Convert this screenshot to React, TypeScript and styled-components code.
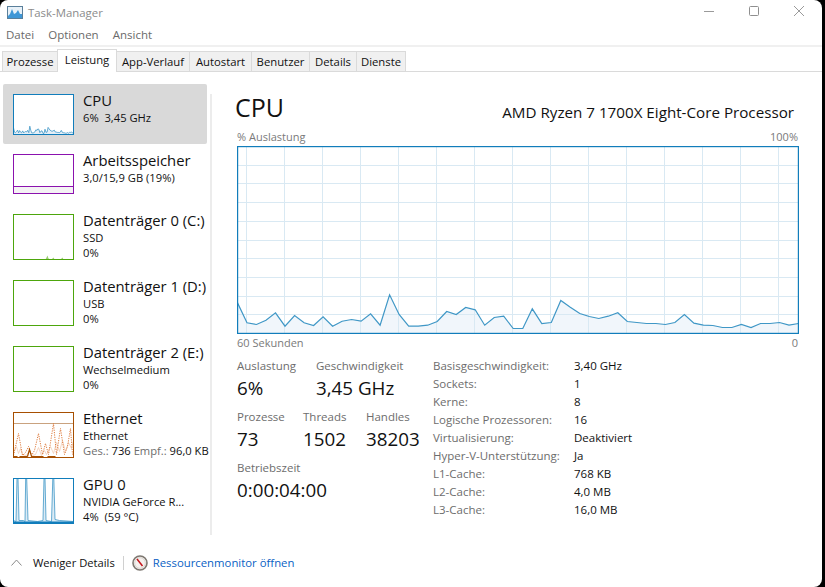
import React from "react"
import styled, { createGlobalStyle } from "styled-components"

const FONT = `"Open Sans", "Noto Sans", sans-serif`

const GlobalStyle = createGlobalStyle`
  html, body {
    margin: 0;
    padding: 0;
    background: #000;
    overflow: hidden;
  }
  body {
    font-family: ${FONT};
    font-size: 12px;
    color: #1a1a1a;
  }
`

const Window = styled.div`
  width: 822px;
  height: 587px;
  background: #fff;
  border-radius: 8px;
  display: flex;
  flex-direction: column;
  overflow: hidden;
`
const TitleBar = styled.div`
  height: 24px;
  display: flex;
  align-items: center;
  padding-left: 7px;
  color: #8b8b8b;
  font-size: 11.4px;
  gap: 5px;
`
const WindowButtons = styled.div`
  margin-left: auto;
  display: flex;
  align-items: center;
  gap: 35px;
  padding-right: 18px;
  padding-bottom: 3px;
`
const MenuBar = styled.div`
  height: 21px;
  display: flex;
  align-items: center;
  gap: 14px;
  padding-left: 6px;
  color: #6a6a6a;
  border-bottom: 2px solid #f0f0f0;
  font-size: 11.5px;
`
const TabStrip = styled.div`
  height: 24px;
  display: flex;
  align-items: flex-end;
  padding-left: 3px;
  border-bottom: 1px solid #dadada;
`
const Tab = styled.div<{ $active?: boolean; $w: number }>`
  width: ${p => p.$w}px;
  height: ${p => (p.$active ? 23 : 20)}px;
  box-sizing: border-box;
  display: flex;
  align-items: center;
  justify-content: center;
  font-size: 11.3px;
  color: #111;
  background: ${p => (p.$active ? "#fff" : "#f0f0f0")};
  border: 1px solid #dadada;
  border-bottom: none;
  margin-bottom: ${p => (p.$active ? -1 : 0)}px;
  padding-bottom: ${p => (p.$active ? 3 : 0)}px;
  margin-left: -1px;
  position: relative;
`
const Body = styled.div`
  flex: 1;
  display: flex;
  min-height: 0;
`
const Sidebar = styled.div`
  width: 207px;
  padding: 12px 0 0 3px;
  flex-shrink: 0;
`
const NavItem = styled.div<{ $selected?: boolean; $h: number }>`
  height: ${p => p.$h}px;
  width: ${p => (p.$selected ? 204 : 207)}px;
  box-sizing: border-box;
  padding: 10px 0 0 10px;
  display: flex;
  gap: 9px;
  overflow: hidden;
  white-space: nowrap;
  border-radius: 2px;
  background: ${p => (p.$selected ? "#d9d9d9" : "transparent")};
`
const NavText = styled.div`
  margin-top: -3px;
`
const NavName = styled.div`
  font-size: 14.8px;
  line-height: 19px;
  color: #111;
`
const NavLine = styled.div`
  font-size: 11.2px;
  line-height: 15px;
  color: #111;
`
const Muted = styled.span`
  color: #6d6d6d;
`
const Divider = styled.div`
  width: 2px;
  height: 441px;
  margin: 22px 25px 0 0;
  background: #ececec;
  flex-shrink: 0;
`
const Main = styled.div`
  width: 561px;
  padding-top: 20px;
`
const Header = styled.div`
  height: 36px;
  display: flex;
  align-items: center;
  justify-content: space-between;
`
const Title = styled.div`
  font-size: 25px;
  line-height: 30px;
  margin-left: -2px;
  padding-bottom: 6px;
  color: #111;
`
const Processor = styled.div`
  font-size: 15.2px;
  padding-right: 4px;
  padding-top: 4px;
  color: #111;
`
const CaptionRow = styled.div`
  height: 16px;
  padding-bottom: 2px;
  display: flex;
  justify-content: space-between;
  align-items: center;
  font-size: 11px;
  color: #7a7a7a;
`
const StatsArea = styled.div`
  display: flex;
  margin-top: 5px;
`
const StatsLeft = styled.div`
  width: 196px;
`
const StatRow = styled.div`
  display: flex;
  margin-bottom: 7px;
`
const Stat = styled.div<{ $w?: number }>`
  width: ${p => (p.$w ? `${p.$w}px` : "auto")};
`
const StatLabel = styled.div`
  font-size: 11.5px;
  line-height: 18px;
  color: #6d6d6d;
`
const StatValue = styled.div`
  font-size: 18.8px;
  line-height: 26px;
  color: #111;
`
const SpecGrid = styled.div`
  display: grid;
  grid-template-columns: 141px auto;
  grid-auto-rows: 18px;
  align-items: center;
  font-size: 11.5px;
  margin-top: -1px;
  align-self: flex-start;
`
const SpecLabel = styled.div`
  color: #6d6d6d;
`
const SpecValue = styled.div`
  color: #111;
`
const Footer = styled.div`
  height: 43px;
  padding-bottom: 3px;
  flex-shrink: 0;
  display: flex;
  align-items: center;
  padding-left: 11px;
  font-size: 11.2px;
`
const LessDetails = styled.div`
  margin-left: 11px;
  color: #111;
`
const FooterRule = styled.div`
  width: 1px;
  height: 14px;
  background: #d0d0d0;
  margin: 0 8px;
`
const MonitorLink = styled.div`
  margin-left: 5px;
  font-size: 11.35px;
  color: #0a5fc4;
`
const ChartSvg = styled.svg`
  display: block;
  flex-shrink: 0;
`

// y values read off the reference, 3x crop pixels (baseline 157)
const cpuData = [
  65, 125, 130, 117, 95, 135, 103, 125, 133, 107, 135, 120, 115, 120, 98, 132, 41, 100, 135, 135,
  132, 121, 91, 100, 79, 86, 132, 109, 105, 142, 142, 83, 127, 124, 58, 78, 97, 106, 112, 105,
  95, 121, 124, 127, 127, 130, 124, 100, 126, 132, 133, 139, 139, 130, 139, 127, 127, 124, 132, 127,
]

const linePoints = (w: number, h: number, scale: number) =>
  cpuData.map((v, i) => `${((i * w) / 59).toFixed(1)},${(h - ((157 - v) / 3) * scale).toFixed(1)}`).join(" ")

const CpuChart = () => {
  const w = 561
  const h = 187
  const pts = linePoints(w, h, 1)
  const vs = Array.from({ length: 15 }, (_, i) => 9 + i * 38)
  const hs = Array.from({ length: 9 }, (_, i) => Math.round((i + 1) * 18.7))
  return (
    <ChartSvg width={w + 1} height={h + 1} viewBox={`-0.5 -0.5 ${w + 1} ${h + 1}`}>
      <polygon points={`0,${h} ${pts} ${w},${h}`} fill="#f1f6fb" />
      {vs.map(x => <line key={x} x1={x} x2={x} y1={0} y2={h} stroke="#d9e9f3" strokeWidth="1" />)}
      {hs.map(y => <line key={y} x1={0} x2={w} y1={y} y2={y} stroke="#d9e9f3" strokeWidth="1" />)}
      <polyline points={pts} fill="none" stroke="#3f97c6" strokeWidth="1.2" />
      <rect x="0" y="0" width={w} height={h} fill="none" stroke="#117dbb" strokeWidth="1.4" />
    </ChartSvg>
  )
}

const Mini = ({ color, h = 45, children }: { color: string; h?: number; children?: React.ReactNode }) => (
  <ChartSvg width={61} height={h + 1} viewBox={`-0.5 -0.5 61 ${h + 1}`}>
    {children}
    <rect x="0" y="0" width="60" height={h} fill="none" stroke={color} strokeWidth="1" />
  </ChartSvg>
)

const nets = "0,40 3,34 5,41 7,36 9,42 13,43 16,38 19,43 22,42 25,35 28,43 31,38 33,42 37,34 40,41 43,30 46,39 49,28 52,39 55,30 58,36 60,28"
const netsPeak = "0,43 5,21 9,43 12,40 15,34 18,43 21,38 25,21 29,42 32,31 35,42 37,30 40,11 43,42 47,16 51,42 54,34 57,16 59,42"

const specs: [string, string][] = [
  ["Basisgeschwindigkeit:", "3,40 GHz"],
  ["Sockets:", "1"],
  ["Kerne:", "8"],
  ["Logische Prozessoren:", "16"],
  ["Virtualisierung:", "Deaktiviert"],
  ["Hyper-V-Unterstützung:", "Ja"],
  ["L1-Cache:", "768 KB"],
  ["L2-Cache:", "4,0 MB"],
  ["L3-Cache:", "16,0 MB"],
]

const tabs: [string, number][] = [
  ["Prozesse", 56], ["Leistung", 60], ["App-Verlauf", 74], ["Autostart", 63],
  ["Benutzer", 59], ["Details", 48], ["Dienste", 50],
]

const GREEN = "#4da60c"

const App = () => {
  const cpuMini = linePoints(60, 40, 40 / 187)
  return (
    <Window>
      <GlobalStyle />
      <TitleBar>
        <svg width="16" height="13" viewBox="0 0 16 13">
          <rect x="0.5" y="0.5" width="15" height="12" fill="#e8f1f8" stroke="#5a7f9a" />
          <path d="M1 10 L3 8 L5 3 L7 8 L9 7 L11 4 L13 8 L15 8 L15 12 L1 12 Z" fill="#3f97d6" />
        </svg>
        Task-Manager
        <WindowButtons>
          <svg width="10" height="10" viewBox="0 0 10 10"><path d="M0 5.5H10" stroke="#9a9a9a" /></svg>
          <svg width="10" height="10" viewBox="0 0 10 10"><rect x="0.5" y="0.5" width="9" height="9" rx="1" fill="none" stroke="#8f8f8f" /></svg>
          <svg width="10" height="10" viewBox="0 0 10 10"><path d="M0 0L10 10M10 0L0 10" stroke="#9a9a9a" /></svg>
        </WindowButtons>
      </TitleBar>
      <MenuBar>
        <span>Datei</span>
        <span>Optionen</span>
        <span>Ansicht</span>
      </MenuBar>
      <TabStrip>
        {tabs.map(([label, w]) => (
          <Tab key={label} $w={w} $active={label === "Leistung"}>{label}</Tab>
        ))}
      </TabStrip>
      <Body>
        <Sidebar>
          <NavItem $selected $h={60}>
            <Mini color="#117dbb" h={40}>
              <rect x="0" y="0" width="60" height="40" fill="#fff" />
              <polygon points={`0,40 ${cpuMini} 60,40`} fill="#e4eff7" />
              <polyline points={cpuMini} fill="none" stroke="#3f97c6" strokeWidth="0.8" />
            </Mini>
            <NavText>
              <NavName>CPU</NavName>
              <NavLine>6%&nbsp; 3,45 GHz</NavLine>
            </NavText>
          </NavItem>
          <NavItem $h={60}>
            <Mini color="#8b12ae" h={39}>
              <rect x="0" y="32" width="60" height="7" fill="#f4f2f4" />
              <line x1="0" x2="60" y1="32" y2="32" stroke="#8b12ae" />
            </Mini>
            <NavText>
              <NavName>Arbeitsspeicher</NavName>
              <NavLine>3,0/15,9 GB (19%)</NavLine>
            </NavText>
          </NavItem>
          <NavItem $h={66}>
            <Mini color={GREEN}>
              <polygon points="32,45 34,41 35,44 37,45" fill="#9ccf74" />
              <polygon points="38,45 40,43 41,45" fill="#9ccf74" />
              <polygon points="47,45 49,43 50,45" fill="#9ccf74" />
            </Mini>
            <NavText>
              <NavName>Datenträger 0 (C:)</NavName>
              <NavLine>SSD</NavLine>
              <NavLine>0%</NavLine>
            </NavText>
          </NavItem>
          <NavItem $h={66}>
            <Mini color={GREEN} />
            <NavText>
              <NavName>Datenträger 1 (D:)</NavName>
              <NavLine>USB</NavLine>
              <NavLine>0%</NavLine>
            </NavText>
          </NavItem>
          <NavItem $h={66}>
            <Mini color={GREEN} />
            <NavText>
              <NavName>Datenträger 2 (E:)</NavName>
              <NavLine>Wechselmedium</NavLine>
              <NavLine>0%</NavLine>
            </NavText>
          </NavItem>
          <NavItem $h={66}>
            <Mini color="#a74f01">
              <line x1="0" x2="60" y1="11" y2="11" stroke="#c9a27f" />
              <polyline points={nets} fill="none" stroke="#f3cdb6" strokeWidth="0.8" />
              <polyline points={netsPeak} fill="none" stroke="#dd7a3c" strokeWidth="1" strokeDasharray="1.2 1.2" />
              <path d="M0 44H4M6 44H14M14 44L16 37L18 44H30M34 44H42" stroke="#a74f01" strokeWidth="1.2" fill="none" />
            </Mini>
            <NavText>
              <NavName>Ethernet</NavName>
              <NavLine>Ethernet</NavLine>
              <NavLine><Muted>Ges.:</Muted> 736 <Muted>Empf.:</Muted> 96,0 KB</NavLine>
            </NavText>
          </NavItem>
          <NavItem $h={66}>
            <Mini color="#117dbb">
              <path d="M0 42 L2.5 43 L3.5 0 L4.5 0 L5.5 42 L10 42 L11.5 43 L12.2 0 L13.2 0 L14.5 42 L24 43 L29.5 42 L30.5 0 L31.5 0 L32.5 42 L38 43 L39.3 0 L40.3 0 L41.5 41 L46 42 L60 43 L60 45 L0 45 Z" fill="#dcebf5" stroke="#3f97c6" strokeWidth="0.8" />
              <rect x="0" y="43" width="60" height="2" fill="#117dbb" />
            </Mini>
            <NavText>
              <NavName>GPU 0</NavName>
              <NavLine>NVIDIA GeForce R...</NavLine>
              <NavLine>4%&nbsp; (59 °C)</NavLine>
            </NavText>
          </NavItem>
        </Sidebar>
        <Divider />
        <Main>
          <Header>
            <Title>CPU</Title>
            <Processor>AMD Ryzen 7 1700X Eight-Core Processor</Processor>
          </Header>
          <CaptionRow>
            <span>% Auslastung</span>
            <span>100%</span>
          </CaptionRow>
          <CpuChart />
          <CaptionRow>
            <span>60 Sekunden</span>
            <span>0</span>
          </CaptionRow>
          <StatsArea>
            <StatsLeft>
              <StatRow>
                <Stat $w={79}>
                  <StatLabel>Auslastung</StatLabel>
                  <StatValue>6%</StatValue>
                </Stat>
                <Stat>
                  <StatLabel>Geschwindigkeit</StatLabel>
                  <StatValue>3,45 GHz</StatValue>
                </Stat>
              </StatRow>
              <StatRow>
                <Stat $w={66}>
                  <StatLabel>Prozesse</StatLabel>
                  <StatValue>73</StatValue>
                </Stat>
                <Stat $w={63}>
                  <StatLabel>Threads</StatLabel>
                  <StatValue>1502</StatValue>
                </Stat>
                <Stat>
                  <StatLabel>Handles</StatLabel>
                  <StatValue>38203</StatValue>
                </Stat>
              </StatRow>
              <StatRow>
                <Stat>
                  <StatLabel>Betriebszeit</StatLabel>
                  <StatValue>0:00:04:00</StatValue>
                </Stat>
              </StatRow>
            </StatsLeft>
            <SpecGrid>
              {specs.map(([k, v]) => (
                <React.Fragment key={k}>
                  <SpecLabel>{k}</SpecLabel>
                  <SpecValue>{v}</SpecValue>
                </React.Fragment>
              ))}
            </SpecGrid>
          </StatsArea>
        </Main>
      </Body>
      <Footer>
        <svg width="11" height="7" viewBox="0 0 11 7"><path d="M0.5 6.5L5.5 1L10.5 6.5" fill="none" stroke="#8a8a8a" /></svg>
        <LessDetails>Weniger Details</LessDetails>
        <FooterRule />
        <svg width="16" height="16" viewBox="0 0 16 16">
          <circle cx="8" cy="8" r="7" fill="#f5f1ee" stroke="#7d7770" strokeWidth="1.6" />
          <circle cx="8" cy="8" r="5.3" fill="none" stroke="#c9c4be" strokeWidth="0.6" />
          <path d="M5 4L10.5 11" stroke="#c4141a" strokeWidth="1.5" />
        </svg>
        <MonitorLink>Ressourcenmonitor öffnen</MonitorLink>
      </Footer>
    </Window>
  )
}

export default App
